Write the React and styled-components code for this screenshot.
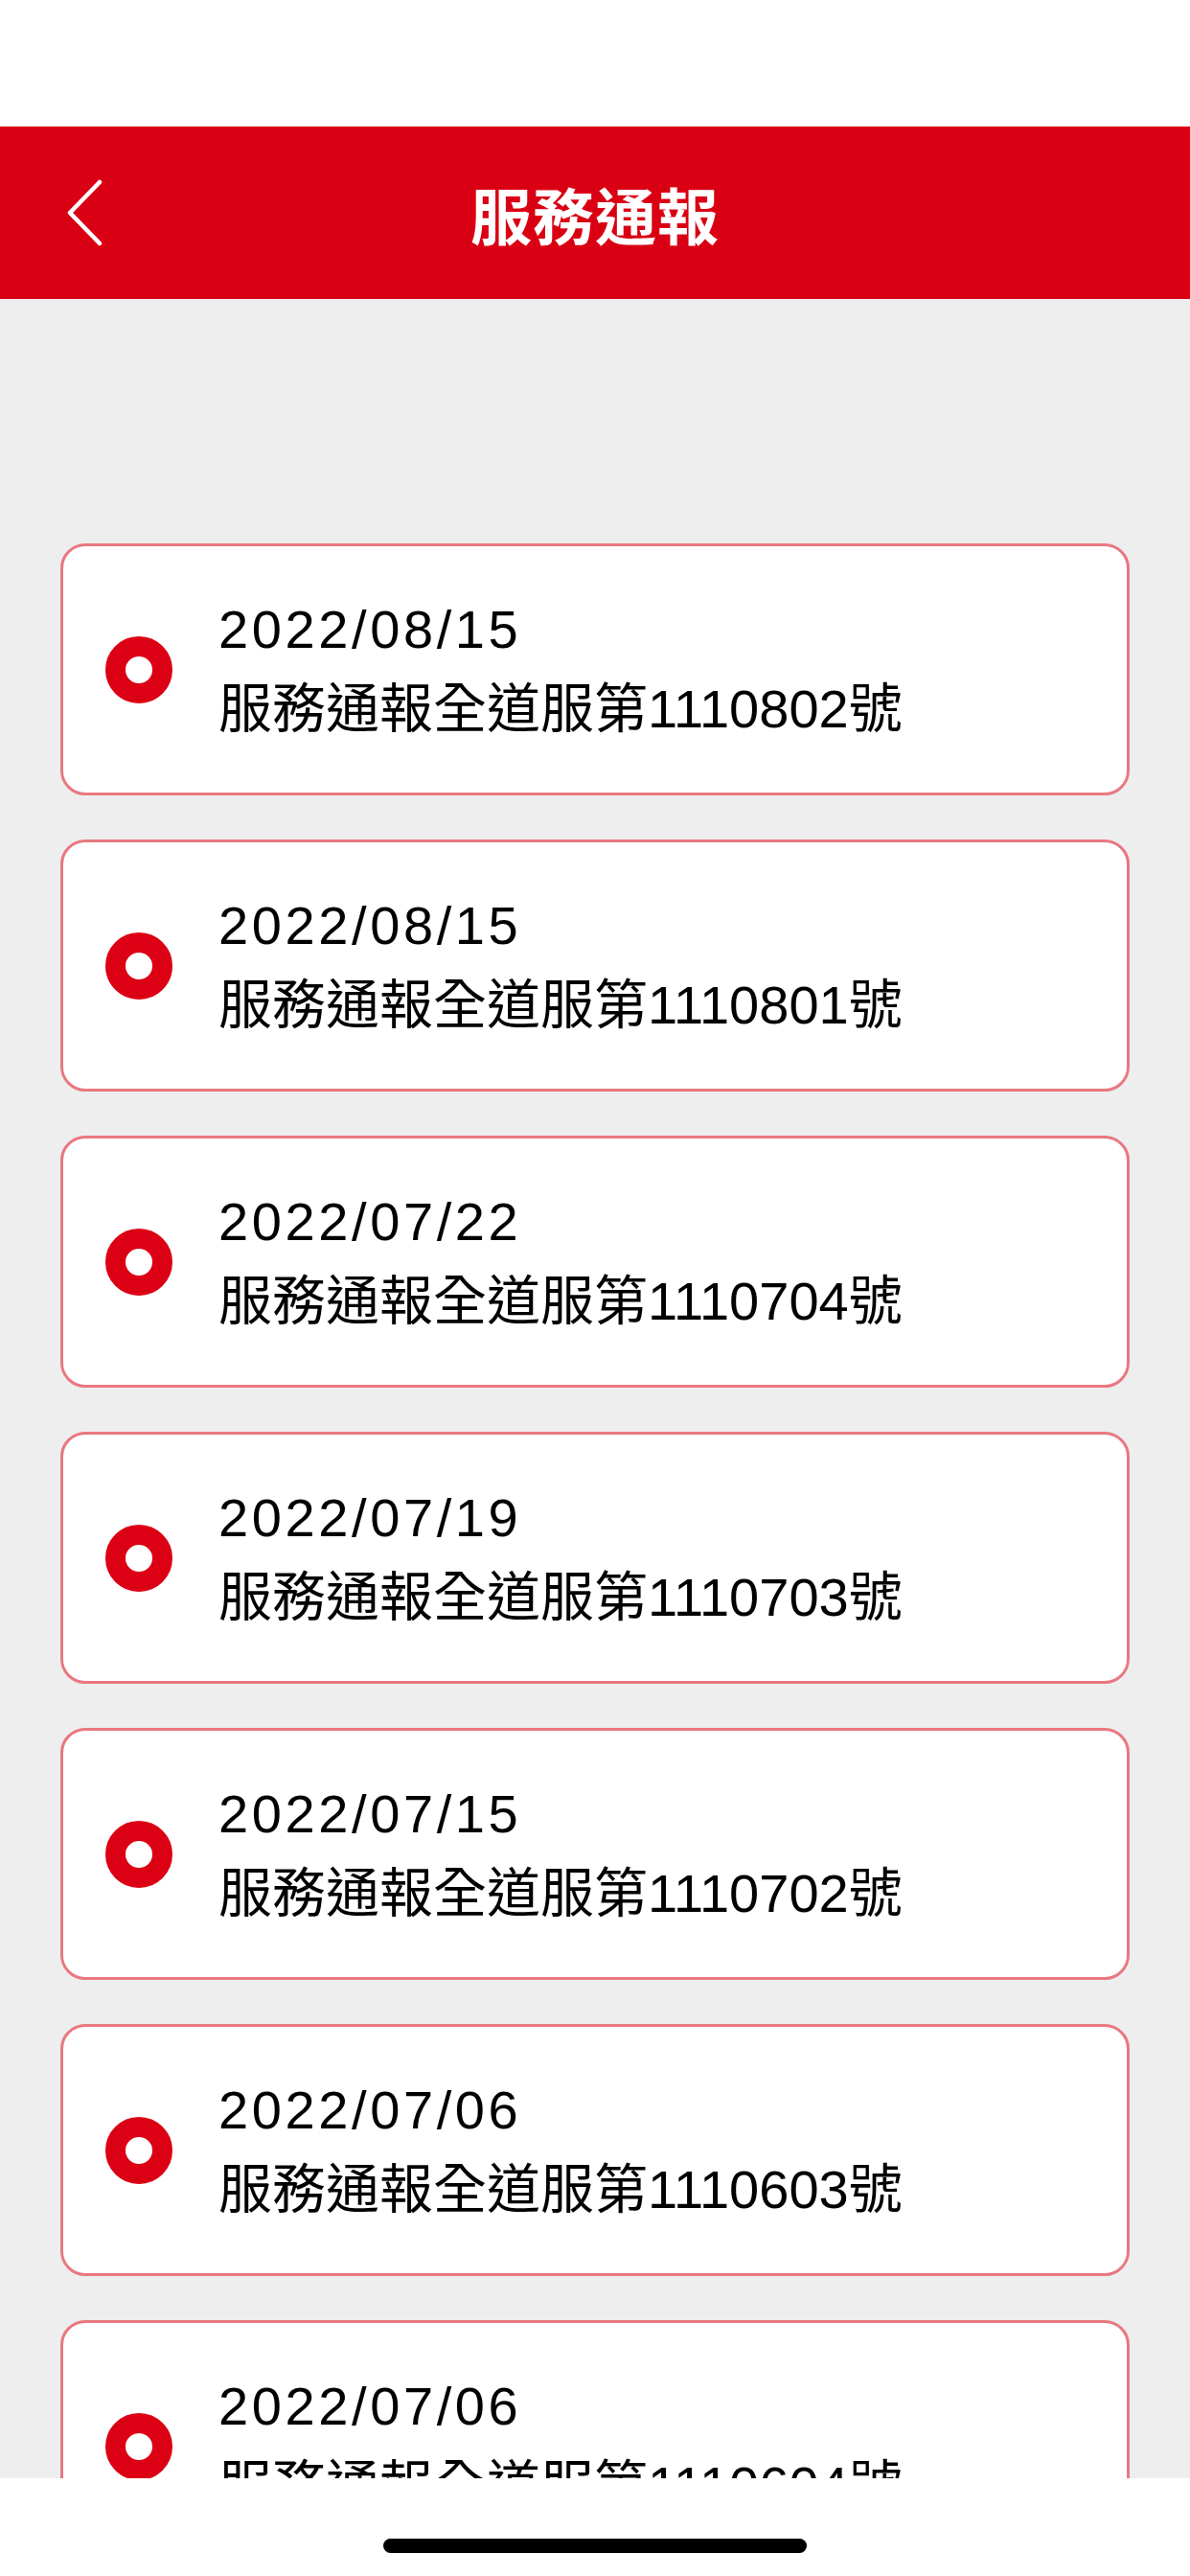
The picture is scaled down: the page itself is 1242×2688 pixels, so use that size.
import React from 'react';
import styled, { createGlobalStyle } from 'styled-components';

const GlobalStyle = createGlobalStyle`
  html, body {
    margin: 0;
    padding: 0;
    background: #ffffff;
  }
  * {
    box-sizing: border-box;
  }
`;

const notices = [
  { date: '2022/08/15', title: '服務通報全道服第1110802號' },
  { date: '2022/08/15', title: '服務通報全道服第1110801號' },
  { date: '2022/07/22', title: '服務通報全道服第1110704號' },
  { date: '2022/07/19', title: '服務通報全道服第1110703號' },
  { date: '2022/07/15', title: '服務通報全道服第1110702號' },
  { date: '2022/07/06', title: '服務通報全道服第1110603號' },
  { date: '2022/07/06', title: '服務通報全道服第1110604號' },
];

const Screen = styled.div`
  width: 1242px;
  height: 2688px;
  display: flex;
  flex-direction: column;
  background: #ffffff;
  font-family: "Noto Sans CJK TC", "Noto Sans", sans-serif;
  overflow: hidden;
`;

const StatusBar = styled.div`
  height: 132px;
  flex-shrink: 0;
  background: #ffffff;
`;

const NavBar = styled.header`
  height: 180px;
  flex-shrink: 0;
  background: #da0014;
  display: grid;
  grid-template-columns: 160px 1fr 160px;
  align-items: center;
`;

const BackButton = styled.button`
  width: 100px;
  height: 100px;
  margin-left: 40px;
  padding: 0;
  border: none;
  background: none;
  display: flex;
  align-items: center;
  justify-content: flex-start;
  cursor: pointer;
  svg {
    margin-left: 29px;
  }
`;

const Title = styled.h1`
  margin: 0;
  text-align: center;
  color: #ffffff;
  font-size: 64px;
  font-weight: 700;
  line-height: 1;
  letter-spacing: 1px;
`;

const Content = styled.main`
  flex: 1;
  min-height: 0;
  overflow: hidden;
  background: #eeeeee;
  padding: 255px 63px 0;
  display: flex;
  flex-direction: column;
  gap: 46px;
`;

const Card = styled.div`
  flex-shrink: 0;
  height: 263px;
  background: #ffffff;
  border: 3px solid #e97880;
  border-radius: 26px;
  display: flex;
  align-items: center;
  padding-left: 44px;
  gap: 48px;
`;

const Dot = styled.span`
  width: 70px;
  height: 70px;
  flex-shrink: 0;
  border-radius: 50%;
  border: 21px solid ${({ $color }) => $color || '#dc0014'};
  background: #ffffff;
`;

const TextBlock = styled.div`
  display: flex;
  flex-direction: column;
  color: #000000;
  font-family: "Liberation Sans", "Noto Sans CJK TC", sans-serif;
  font-size: 56px;
  line-height: 83px;
  padding-bottom: 2px;
`;

const DateText = styled.div`
  letter-spacing: 3.6px;
`;

const NoticeTitle = styled.div`
  letter-spacing: 0;
`;

const HomeArea = styled.div`
  height: 102px;
  flex-shrink: 0;
  background: #ffffff;
  display: flex;
  justify-content: center;
  padding-top: 63px;
`;

const HomeIndicator = styled.div`
  width: 442px;
  height: 15px;
  border-radius: 8px;
  background: #000000;
`;

const ChevronLeft = () => (
  <svg width="40" height="70" viewBox="0 0 40 70" fill="none">
    <polyline
      points="35,3 4,35 35,67"
      stroke="#ffffff"
      strokeWidth="4.5"
      strokeLinecap="round"
      strokeLinejoin="round"
    />
  </svg>
);

const NoticeCard = ({ date, title }) => (
  <Card>
    <Dot />
    <TextBlock>
      <DateText>{date}</DateText>
      <NoticeTitle>{title}</NoticeTitle>
    </TextBlock>
  </Card>
);

const App = () => (
  <>
    <GlobalStyle />
    <Screen>
      <StatusBar />
      <NavBar>
        <BackButton aria-label="back">
          <ChevronLeft />
        </BackButton>
        <Title>服務通報</Title>
        <div />
      </NavBar>
      <Content>
        {notices.map((n, i) => (
          <NoticeCard key={i} date={n.date} title={n.title} />
        ))}
      </Content>
      <HomeArea>
        <HomeIndicator />
      </HomeArea>
    </Screen>
  </>
);

export default App;
